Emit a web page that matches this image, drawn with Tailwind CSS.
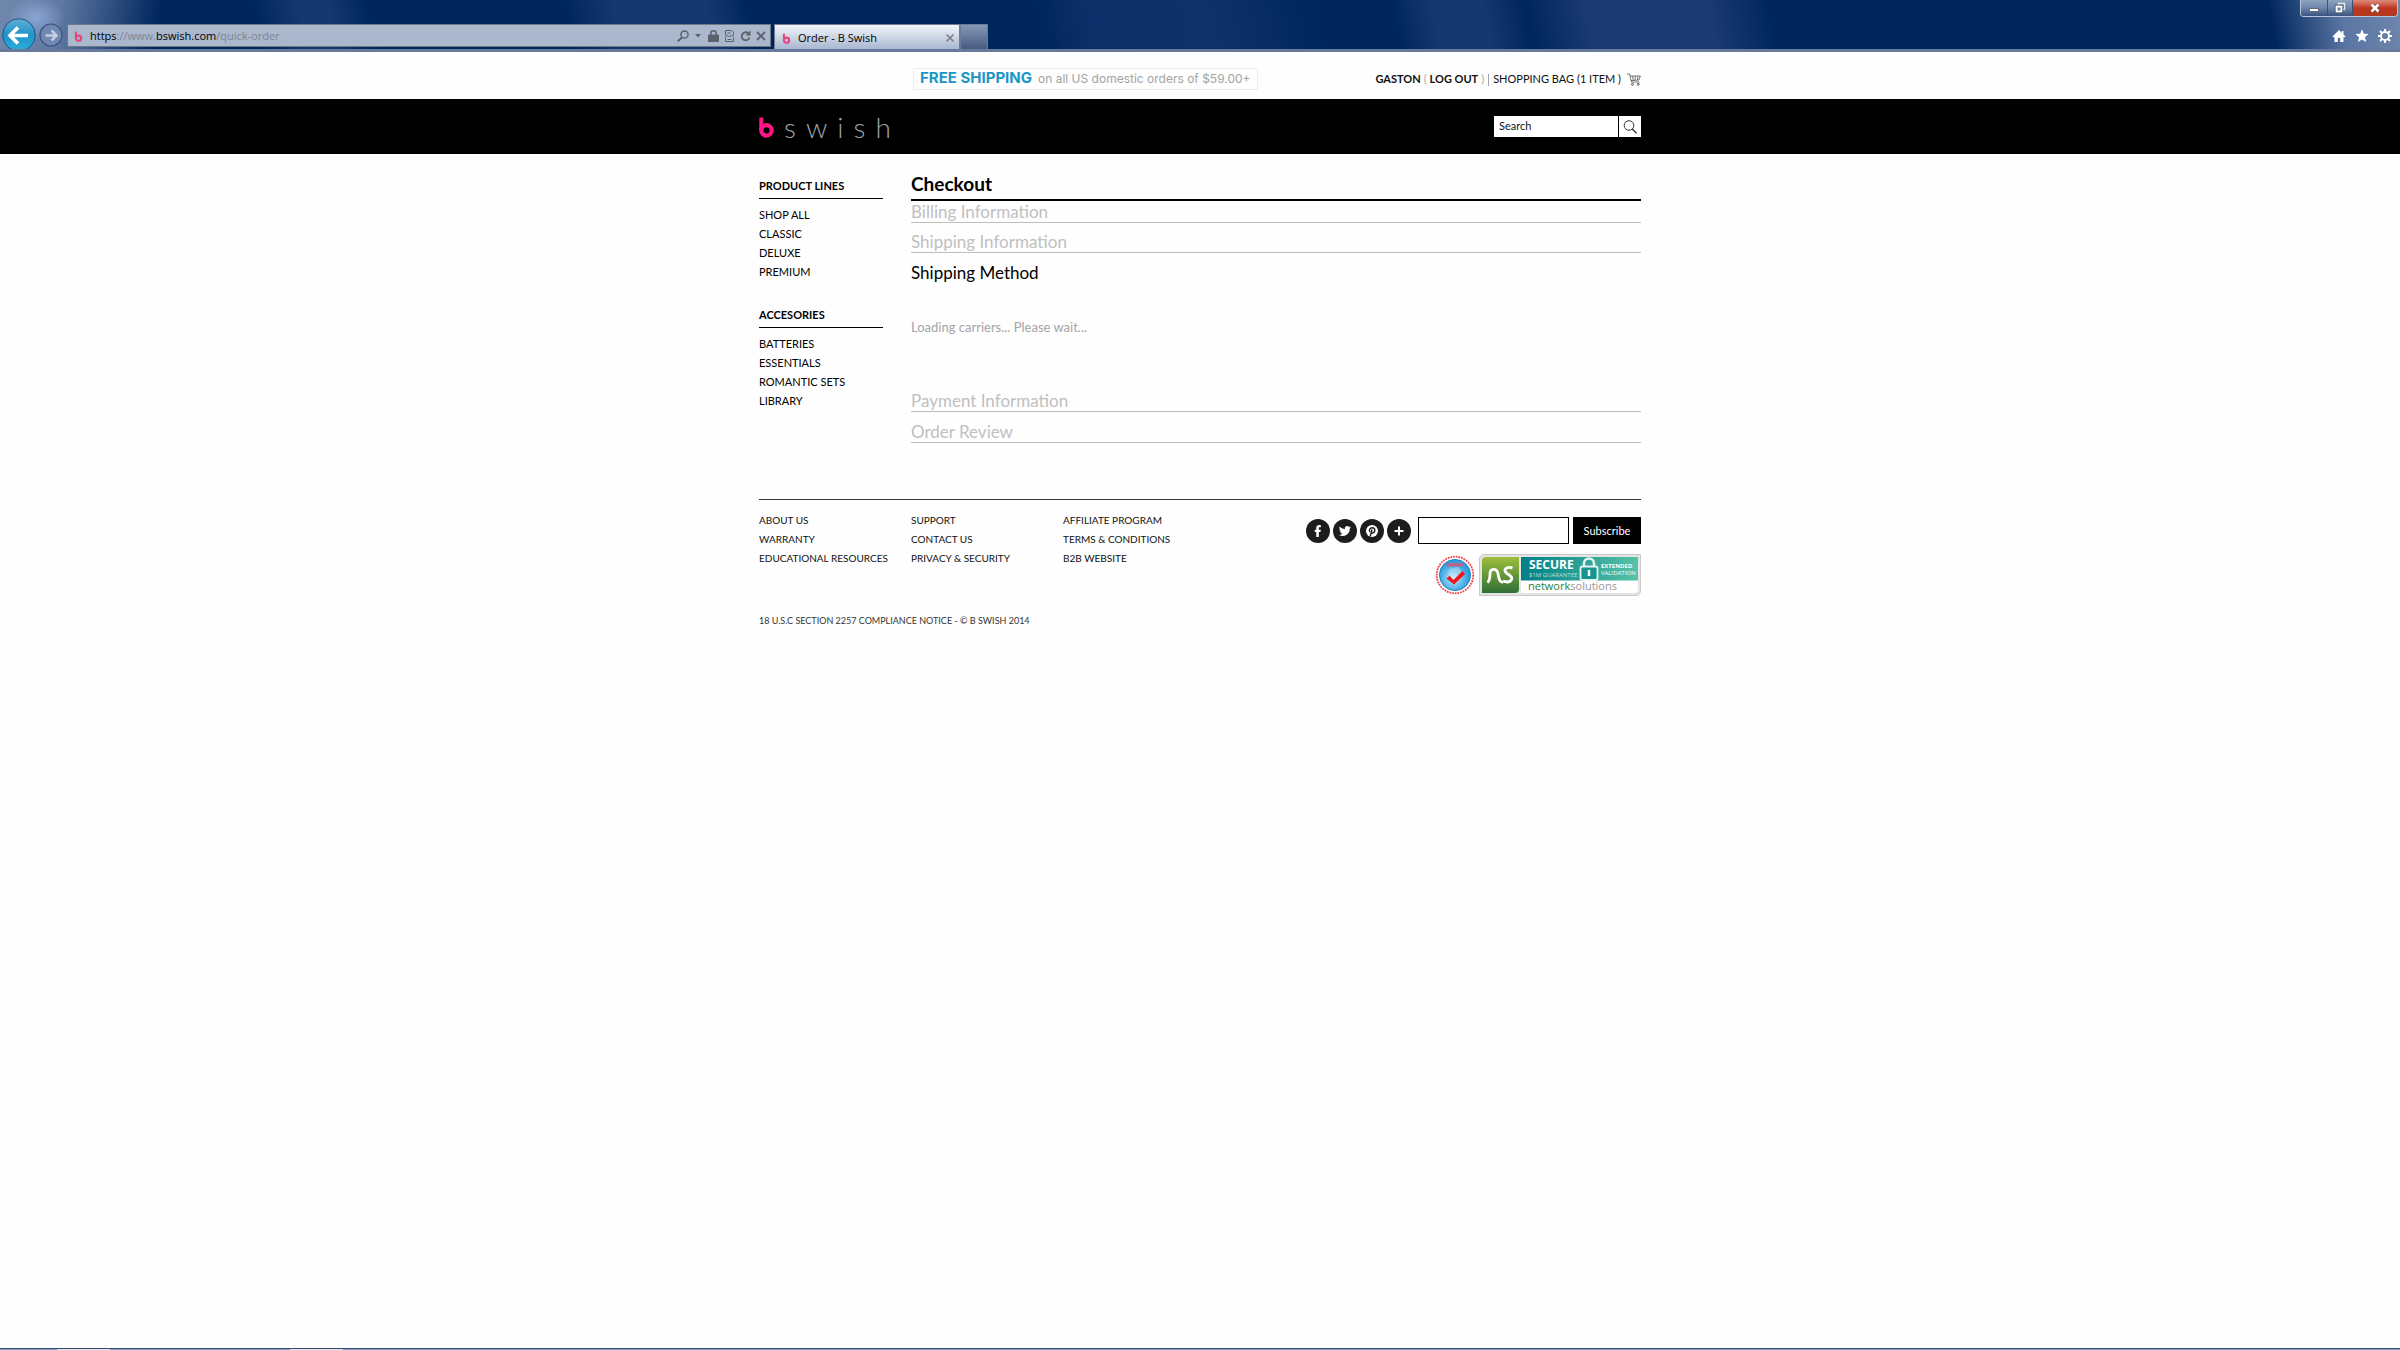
<!DOCTYPE html>
<html lang="en">
<head>
    <meta charset="UTF-8">
    <meta name="viewport" content="width=device-width, initial-scale=1.0">
    <script src="https://cdn.jsdelivr.net/npm/@tailwindcss/browser@4"></script>
    <title>Order - B Swish</title>
</head>
<body class="bg-[#fefefe] font-['Lato',sans-serif] text-[#1a1a1a]">
    <!-- Shared brand mark -->
    <svg class="hidden">
        <symbol id="brand" viewBox="0 0 15 22">
            <path d="M2.3 1.5V14" fill="none" stroke="currentColor" stroke-width="4"/>
            <circle cx="7.5" cy="14.4" r="5.2" fill="none" stroke="currentColor" stroke-width="4.2"/>
        </symbol>
    </svg>

    <div class="flex min-h-screen flex-col">
        <!-- Browser window -->
        <div class="relative flex h-[52px] items-end border-b-3 border-[#687a9b] pl-[67px] bg-[radial-gradient(ellipse_28px_22px_at_36px_18px,#94afdfcc,transparent),linear-gradient(100deg,#7088ac_0px,#5f7aa3_60px,#0a2c6500_160px),linear-gradient(260deg,#6f86ad_0px,#5a76a3_60px,#0a2c6500_130px),linear-gradient(78deg,#00265e_0px,#00265e_255px,#16376f_300px,#16376f_330px,#00265e_370px,#00265e_560px,#16376f_610px,#16376f_700px,#00265e_740px,#00265e_1020px,#0d2f69_1070px,#0f316a_1190px,#00265e_1300px,#00265e_1370px,#16376f_1410px,#16376f_1460px,#00265e_1500px,#1a3a71_1560px,#1a3a71_1680px,#00265e_1740px,#00265e_2400px)]">
            <button aria-label="Back" class="absolute bottom-0 left-[2px] h-[31px] w-[34px] overflow-hidden">
                <svg viewBox="0 0 34 31" class="size-full">
                    <defs>
                        <linearGradient id="back" x1="0" y1="0" x2="0" y2="1">
                            <stop offset="0" stop-color="#5fb0d6"/><stop offset=".5" stop-color="#1f93c8"/><stop offset="1" stop-color="#2cb0e0"/>
                        </linearGradient>
                    </defs>
                    <circle cx="17" cy="17" r="16.3" fill="url(#back)" stroke="#2c4f7d" stroke-width="1"/>
                    <path d="M26 17.5H9M16 9.5l-8 8 8 8" fill="none" stroke="#fff" stroke-width="3.6"/>
                </svg>
            </button>
            <button aria-label="Forward" class="absolute bottom-[2px] left-[39px] size-6">
                <svg viewBox="0 0 24 24" class="size-full">
                    <circle cx="12" cy="12" r="11" fill="#7087b1" stroke="#3c5480" stroke-width="1.2"/>
                    <path d="M6.500 12.500H17M12.500 7.500l5 5-5 5" fill="none" stroke="#c3cde0" stroke-width="2.500"/>
                </svg>
            </button>

            <div class="mb-[2px] flex h-[23px] w-[704px] items-center border border-[#707883] bg-[#aab7cd] pl-[6px] pr-1 pt-px text-[#5c626c]">
                <svg class="mr-[7px] h-[11px] w-[9px] text-[#e5457f]"><use href="#brand"/></svg>
                <p class="flex-1 font-['Open_Sans',sans-serif] text-[11px] text-[#808690]"><span class="text-black">https</span>://www.<span class="text-black">bswish.com</span>/quick-order</p>
                <button aria-label="Search the web"><svg viewBox="0 0 12 12" class="size-3" fill="none" stroke="currentColor"><circle cx="7.500" cy="4.500" r="3.600" stroke-width="1.500"/><path d="M5 7.500L.8 11.300" stroke-width="2"/></svg></button>
                <button aria-label="Show address list" class="ml-[6px]"><svg viewBox="0 0 6 4" class="h-1 w-[6px]" fill="currentColor"><path d="M0 0h6L3 3.500z"/></svg></button>
                <button aria-label="Security report" class="ml-[7px]"><svg viewBox="0 0 11 12" class="h-3 w-[11px]" fill="none" stroke="currentColor"><path d="M.5 5h10v6.500H.5z" fill="currentColor"/><path d="M2.800 6V3.500a2.700 2.700 0 015.400 0V6" stroke-width="1.500"/></svg></button>
                <button aria-label="Compatibility view" class="ml-[6px]"><svg viewBox="0 0 9 12" class="h-3 w-[9px]" fill="none" stroke="currentColor"><path d="M.5 5V.5h6l2 2V5M.5 7.500v4h8v-4M2.500 3h3M2.500 9.500h4"/><path d="M0 6.500l2-1 2.500 1 2.500-1 2 1" /></svg></button>
                <button aria-label="Refresh" class="ml-[6px]"><svg viewBox="0 0 11 12" class="h-3 w-[11px]" fill="none" stroke="currentColor"><path d="M9 4A4 4 0 109.500 7.500" stroke-width="1.800"/><path d="M10.500.5v5h-5z" fill="currentColor" stroke="none"/></svg></button>
                <button aria-label="Stop" class="ml-[5px]"><svg viewBox="0 0 10 10" class="size-[10px]" fill="none" stroke="currentColor" stroke-width="1.900"><path d="M1 1l8 8M9 1L1 9"/></svg></button>
            </div>

            <div class="ml-[3px] flex h-[25px] w-[186px] items-center border border-b-0 border-[#707c92] bg-linear-to-b from-[#f4f6fa] to-[#a9b7d1] pl-[7px] pr-[5px] pt-[2px]">
                <svg class="mr-[7px] h-[11px] w-[9px] text-[#e5457f]"><use href="#brand"/></svg>
                <span class="flex-1 font-['Open_Sans',sans-serif] text-[11px] text-black">Order - B Swish</span>
                <button aria-label="Close tab"><svg viewBox="0 0 8 8" class="size-2" fill="none" stroke="#83868c" stroke-width="1.700"><path d="M.5.5l7 7M7.500.5l-7 7"/></svg></button>
            </div>
            <button aria-label="New tab" class="h-[25px] w-7 border border-b-0 border-[#6b7a96] bg-linear-to-b from-[#8598b8] to-[#485c82]"></button>

            <!-- Window controls -->
            <div class="absolute right-[2px] top-0 flex h-[17px] w-[98px] overflow-hidden rounded-b border border-t-0 border-[#b9c7dc]">
                <button aria-label="Minimize" class="flex w-[27px] items-center justify-center border-r border-[#3d5274] bg-linear-to-b from-[#8fa3c0] via-[#6d85ab] via-50% to-[#3c5580]">
                    <svg viewBox="0 0 12 10" class="h-[10px] w-3"><path d="M1.500 5.500h9v3h-9z" fill="#fff" stroke="#4d5663" stroke-width=".8"/></svg>
                </button>
                <button aria-label="Restore" class="flex w-[25px] items-center justify-center border-r border-[#3d5274] bg-linear-to-b from-[#8fa3c0] via-[#6d85ab] via-50% to-[#3c5580]">
                    <svg viewBox="0 0 12 12" class="size-3" fill="none"><path d="M4.500 3V1.500h6v6H9" stroke="#e8ebf0" stroke-width="1.300"/><path d="M2.500 4.500h5v5h-5z" stroke="#fff" stroke-width="2"/><path d="M1 3h8v8H1z" stroke="#4d5663" stroke-width=".7"/></svg>
                </button>
                <button aria-label="Close" class="flex flex-1 items-center justify-center bg-linear-to-b from-[#dc8c7c] via-[#c0341c] via-50% to-[#b03a20]">
                    <svg viewBox="0 0 12 10" class="h-[10px] w-3" fill="none"><path d="M2.500 1.500l7 7M9.500 1.500l-7 7" stroke="#5b4a52" stroke-width="3.800"/><path d="M2.500 1.500l7 7M9.500 1.500l-7 7" stroke="#fff" stroke-width="2.500"/></svg>
                </button>
            </div>
            <div class="absolute bottom-[6px] right-2 flex items-center gap-[9px] text-white">
                <button aria-label="Home"><svg viewBox="0 0 14 14" class="size-[14px]" fill="currentColor"><path d="M7 1L.5 7.500 1.500 8.500 2.500 7.700V13h3.300V9h2.400v4h3.300V7.700l1 .8 1-1L11.500 5.500V2H9.800v1.800z"/></svg></button>
                <button aria-label="Favorites"><svg viewBox="0 0 14 14" class="size-[14px]" fill="currentColor"><path d="M7 .3l1.800 4.500 4.900.3-3.800 3.100 1.300 4.800L7 10.400 2.800 13l1.300-4.800L.3 5.100l4.900-.3z"/></svg></button>
                <button aria-label="Tools"><svg viewBox="0 0 14 14" class="size-[14px]" fill="none" stroke="currentColor"><circle cx="7" cy="7" r="4" stroke-width="1.800"/><path d="M7 0v3M7 11v3M0 7h3M11 7h3M2 2l2 2M10 10l2 2M12 2l-2 2M4 10l-2 2" stroke-width="2"/></svg></button>
            </div>
        </div>

        <!-- Promo and account -->
        <header>
            <div class="mx-auto flex h-[47px] w-full max-w-[882px] items-center pl-[154px] pt-[6px]">
                <p class="flex h-[22px] items-center whitespace-nowrap rounded-xs border border-[#ececec] px-[6px] font-['Inter',sans-serif] text-[12px] text-[#a3a3a3]"><strong class="mr-[6px] text-[15px] font-bold text-[#1c96c5]">FREE SHIPPING</strong>on all US domestic orders of $59.00+</p>
                <nav class="ml-auto flex items-center whitespace-nowrap pt-[2px] text-[11px] text-[#111]">
                    <a href="#" class="font-bold">GASTON</a>
                    <span class="mx-[3px] text-[#aaa]">(</span>
                    <a href="#" class="font-bold">LOG OUT</a>
                    <span class="ml-[3px] text-[#aaa]">)</span>
                    <span class="mx-1 h-3 w-px bg-[#9aa5b5]"></span>
                    <a href="#" class="flex items-center gap-[6px]">SHOPPING BAG (1 ITEM )
                        <svg viewBox="0 0 14 13" class="h-[13px] w-[14px]" fill="none" stroke="#555"><path d="M0 1h2.500l2 8h8M3 3h10.300l-1.300 4-8 .6M5.500 3l.8 4.300M8.200 3v4.200M11 3l-.6 4" stroke-width=".8"/><circle cx="5.500" cy="11.300" r="1"/><circle cx="11.200" cy="11.300" r="1"/></svg>
                    </a>
                </nav>
            </div>
            <div class="bg-black">
                <div class="mx-auto flex h-[55px] w-full max-w-[882px] items-center justify-between">
                    <a href="#" aria-label="b swish" class="flex items-center">
                        <svg class="h-[22px] w-[15px] text-[#ff1585]"><use href="#brand"/></svg>
                        <span class="ml-[10px] flex gap-[10px] text-[28px] font-light leading-8 text-[#9aa4aa]"><span>s</span><span>w</span><span>i</span><span>s</span><span>h</span></span>
                    </a>
                    <form class="flex h-[21px] gap-px">
                        <input type="text" aria-label="Search" value="Search" class="w-[124px] bg-white px-[5px] text-[11px] text-[#111] outline-none">
                        <button type="submit" aria-label="Go" class="flex w-[22px] items-center justify-center bg-white">
                            <svg viewBox="0 0 14 14" class="size-[14px]" fill="none" stroke="#333"><circle cx="6" cy="5.500" r="4.800"/><path d="M9.300 9l4.200 4.200" stroke-width="1.400"/></svg>
                        </button>
                    </form>
                </div>
            </div>
        </header>

        <div class="mx-auto flex w-full max-w-[882px] gap-7 pt-[23px]">
            <aside class="w-[124px] shrink-0 text-[11px] text-black">
                <h2 class="border-b border-black pb-[3px] leading-[18px] font-bold">PRODUCT LINES</h2>
                <ul class="mb-[25px] mt-[6px] leading-[19px]">
                    <li><a href="#">SHOP ALL</a></li>
                    <li><a href="#">CLASSIC</a></li>
                    <li><a href="#">DELUXE</a></li>
                    <li><a href="#">PREMIUM</a></li>
                </ul>
                <h2 class="border-b border-black pb-[3px] leading-[18px] font-bold">ACCESORIES</h2>
                <ul class="mt-[6px] leading-[19px]">
                    <li><a href="#">BATTERIES</a></li>
                    <li><a href="#">ESSENTIALS</a></li>
                    <li><a href="#">ROMANTIC SETS</a></li>
                    <li><a href="#">LIBRARY</a></li>
                </ul>
            </aside>

            <main class="min-w-0 flex-1 text-[17px] text-[#c0c0c0]">
                <h1 class="flex h-6 items-end overflow-hidden border-b-2 border-black pb-[5px] text-[19px] leading-5 font-bold text-black">Checkout</h1>
                <h2 class="border-b border-[#bdbdbd] leading-[21px]">Billing Information</h2>
                <h2 class="border-b border-[#bdbdbd] pt-2 leading-[21px]">Shipping Information</h2>
                <h2 class="pt-[9px] leading-[22px] text-black">Shipping Method</h2>
                <p class="pb-[53px] pt-[33px] text-[13px] leading-5 text-[#a5a5a5]">Loading carriers... Please wait...</p>
                <h2 class="border-b border-[#bdbdbd] leading-[21px]">Payment Information</h2>
                <h2 class="border-b border-[#bdbdbd] pt-[9px] leading-[21px]">Order Review</h2>
            </main>
        </div>

        <footer class="mx-auto mt-14 w-full max-w-[882px]">
            <div class="flex justify-between border-t border-[#333] pt-[11px]">
                <div class="grid grid-cols-[152px_152px_auto] text-[10px] leading-[19px] text-[#111]">
                    <ul>
                        <li><a href="#">ABOUT US</a></li>
                        <li><a href="#">WARRANTY</a></li>
                        <li><a href="#">EDUCATIONAL RESOURCES</a></li>
                    </ul>
                    <ul>
                        <li><a href="#">SUPPORT</a></li>
                        <li><a href="#">CONTACT US</a></li>
                        <li><a href="#">PRIVACY &amp; SECURITY</a></li>
                    </ul>
                    <ul>
                        <li><a href="#">AFFILIATE PROGRAM</a></li>
                        <li><a href="#">TERMS &amp; CONDITIONS</a></li>
                        <li><a href="#">B2B WEBSITE</a></li>
                    </ul>
                </div>
                <div class="flex flex-col items-end gap-[10px] pt-[6px]">
                    <div class="flex items-center">
                        <div class="mr-[7px] flex gap-[3px]">
                            <a href="#" aria-label="Facebook"><svg viewBox="0 0 24 24" class="size-6"><circle cx="12" cy="12" r="12" fill="#1d1d1b"/><path d="M10.300 18v-5H8.800v-2.300h1.500V9c0-1.900 1-3 2.900-3h1.600v2.300h-1.100c-.7 0-.9.300-.9.900v1.500h2l-.3 2.300h-1.700v5z" fill="#fff"/></svg></a>
                            <a href="#" aria-label="Twitter"><svg viewBox="0 0 24 24" class="size-6"><circle cx="12" cy="12" r="12" fill="#1d1d1b"/><path d="M18 8.300c-.4.200-.9.300-1.400.4.500-.3.900-.8 1.100-1.400-.5.300-1 .5-1.600.6a2.500 2.500 0 00-4.300 2.300c-2.100-.1-3.900-1.100-5.100-2.600-.7 1.100-.3 2.600.8 3.300-.4 0-.8-.1-1.100-.3 0 1.200.8 2.200 2 2.500-.4.100-.7.100-1.100 0 .3 1 1.200 1.700 2.300 1.700A5 5 0 016 15.900 7.100 7.100 0 0016.800 9.600c.5-.4.900-.8 1.200-1.300z" fill="#fff"/></svg></a>
                            <a href="#" aria-label="Pinterest"><svg viewBox="0 0 24 24" class="size-6"><circle cx="12" cy="12" r="12" fill="#1d1d1b"/><circle cx="12" cy="12" r="6" fill="#fff"/><path d="M10.200 17.500l1.800-7M9.900 12.900c-1.300-1.900.1-4.100 2.300-4.100 2 0 3 1.400 2.500 3.200-.5 2-2.400 2.500-3.200 1.300" fill="none" stroke="#1d1d1b" stroke-width="1.400"/></svg></a>
                            <a href="#" aria-label="More"><svg viewBox="0 0 24 24" class="size-6"><circle cx="12" cy="12" r="12" fill="#1d1d1b"/><path d="M12 7.500v9M7.500 12h9" stroke="#fff" stroke-width="2"/></svg></a>
                        </div>
                        <form class="flex h-[27px] gap-1">
                            <input type="email" aria-label="Email address" class="w-[151px] border border-black bg-white px-1 text-[11px] outline-none">
                            <button type="submit" class="w-[68px] bg-black pt-px text-[11px] text-white">Subscribe</button>
                        </form>
                    </div>
                    <div class="flex items-center gap-1">
                        <a href="#" aria-label="Approved site">
                            <svg viewBox="0 0 40 40" class="size-10">
                                <defs><radialGradient id="seal" cx=".45" cy=".6"><stop offset="0" stop-color="#bfe6fb"/><stop offset="1" stop-color="#2c9fe0"/></radialGradient></defs>
                                <circle cx="20" cy="20" r="18.300" fill="none" stroke="#f0464c" stroke-width="1.800" stroke-dasharray="1.800 .9"/>
                                <circle cx="20" cy="20" r="15.500" fill="url(#seal)" stroke="#1b7fc4"/>
                                <rect x="11.500" y="8" width="17" height="3.500" fill="#b9648a"/>
                                <path d="M14 14l9-2 6 7-8 8-9-3z" fill="#fff" opacity=".25"/>
                                <path d="M11.500 23.500l3-2.800 4 4.300 9-9 2.500 3-11 10.500z" fill="#f5121d"/>
                            </svg>
                        </a>
                        <a href="#" aria-label="Network Solutions secure">
                            <svg viewBox="0 0 162 42" class="h-[42px] w-[162px]">
                                <defs>
                                    <linearGradient id="leaf" x1="0" y1="0" x2="0" y2="1"><stop offset="0" stop-color="#9dbf3b"/><stop offset="1" stop-color="#2f6f37"/></linearGradient>
                                    <linearGradient id="teal"><stop offset="0" stop-color="#007f86"/><stop offset="1" stop-color="#58c2a6"/></linearGradient>
                                </defs>
                                <path d="M5 .5h156.500V37a4.500 4.500 0 01-4.500 4.500H.5V5A4.500 4.500 0 015 .5z" fill="#e4e4e4" stroke="#c9c9c9"/>
                                <path d="M42 26h117v9a4 4 0 01-4 4H42z" fill="#fff"/>
                                <path d="M7 3h33v32a4 4 0 01-4 4H3V7a4 4 0 014-4z" fill="url(#leaf)"/>
                                <path d="M42 3h117v23.500H42z" fill="url(#teal)"/>
                                <path d="M8.500 28.500c2.500-2 2.500-5 2.500-9 0-5 6.500-6 8 0 1 5 1 8 5 9M33.500 14c-5-2-9 1-7 4s8 4 6 7.500-6 2.500-8.500 1.500" fill="none" stroke="#fff" stroke-width="2.800"/>
                                <text x="50" y="15" class="font-['Open_Sans'] text-[12px] font-bold" fill="#fff">SECURE</text>
                                <text x="50" y="23" class="font-['Open_Sans'] text-[6px]" fill="#b9e0dc">$1M GUARANTEE</text>
                                <path d="M105 13V9.500a5 5 0 0110 0V13" fill="none" stroke="#e5f4f1" stroke-width="2.500"/>
                                <rect x="101.500" y="12.500" width="17" height="13.500" rx="2" fill="#17958f" stroke="#e5f4f1" stroke-width="1.800"/>
                                <path d="M110 16v6" stroke="#fff" stroke-width="2.500"/>
                                <text x="122" y="14" class="font-['Open_Sans'] text-[6px] font-bold" fill="#fff">EXTENDED</text>
                                <text x="122" y="21" class="font-['Open_Sans'] text-[6px]" fill="#fff">VALIDATION</text>
                                <text x="49" y="36" class="font-['Open_Sans'] text-[11px]" fill="#999"><tspan class="font-medium" fill="#2d8040">network</tspan>solutions</text>
                            </svg>
                        </a>
                    </div>
                </div>
            </div>
            <p class="mt-4 text-[9px] leading-[18px] text-[#333]">18 U.S.C SECTION 2257 COMPLIANCE NOTICE - © B SWISH 2014</p>
        </footer>

        <!-- Top edge of the taskbar -->
        <div class="mt-auto flex h-[2px] border-t border-[#33496d] bg-[#86a0cc] pl-[57px]">
            <span class="h-px w-[53px] bg-[#e8e8e8]"></span>
            <span class="ml-[180px] h-px w-[53px] bg-[#e8e8e8]"></span>
        </div>
    </div>
</body>
</html>
